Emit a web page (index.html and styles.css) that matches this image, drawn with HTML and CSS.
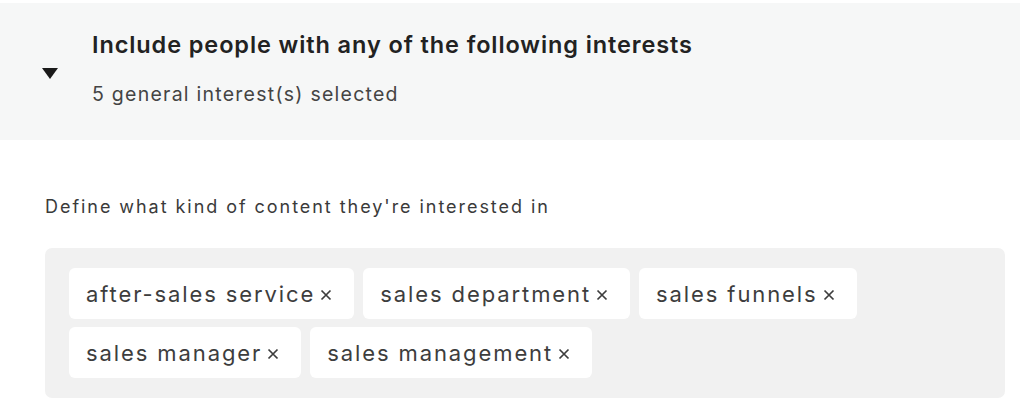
FILE: index.html
```html
<!DOCTYPE html>
<html>
<head>
<meta charset="utf-8">
<link rel="stylesheet" href="styles.css">
</head>
<body>
<div class="page">
  <div class="header">
    <div class="caret"></div>
    <div class="header-text">
      <div class="title">Include people with any of the following interests</div>
      <div class="subtitle">5 general interest(s) selected</div>
    </div>
  </div>
  <div class="content">
    <div class="label">Define what kind of content they're interested in</div>
    <div class="tagbox">
      <span class="tag"><span class="tag-text">after-sales service</span><svg class="x" viewBox="0 0 12 12"><path d="M1.5 1.5 L10.5 10.5 M10.5 1.5 L1.5 10.5"/></svg></span>
      <span class="tag"><span class="tag-text">sales department</span><svg class="x" viewBox="0 0 12 12"><path d="M1.5 1.5 L10.5 10.5 M10.5 1.5 L1.5 10.5"/></svg></span>
      <span class="tag"><span class="tag-text">sales funnels</span><svg class="x" viewBox="0 0 12 12"><path d="M1.5 1.5 L10.5 10.5 M10.5 1.5 L1.5 10.5"/></svg></span>
      <span class="tag"><span class="tag-text">sales manager</span><svg class="x" viewBox="0 0 12 12"><path d="M1.5 1.5 L10.5 10.5 M10.5 1.5 L1.5 10.5"/></svg></span>
      <span class="tag"><span class="tag-text">sales management</span><svg class="x" viewBox="0 0 12 12"><path d="M1.5 1.5 L10.5 10.5 M10.5 1.5 L1.5 10.5"/></svg></span>
    </div>
  </div>
</div>
</body>
</html>
```
FILE: styles.css
```css
html, body {
  margin: 0;
  padding: 0;
  background: #ffffff;
}
body {
  font-family: Inter, "Noto Sans", sans-serif;
  color: #2b2b2b;
}
.page {
  width: 1020px;
  height: 402px;
  overflow: hidden;
  padding-top: 3px;
  box-sizing: border-box;
}
.header {
  height: 137px;
  background: #f6f7f7;
  display: flex;
  align-items: center;
  box-sizing: border-box;
  padding-left: 42px;
}
.caret {
  width: 0;
  height: 0;
  border-left: 8.5px solid transparent;
  border-right: 8.5px solid transparent;
  border-top: 11px solid #1a1a1a;
  margin-top: 4px;
  margin-right: 34px;
}
.header-text {
  display: flex;
  flex-direction: column;
  gap: 22px;
  margin-top: -4px;
}
.title {
  font-size: 23.5px;
  font-weight: 600;
  color: #222222;
  line-height: 28px;
  letter-spacing: 0.9px;
  margin-top: -2px;
}
.subtitle {
  font-size: 19.5px;
  color: #444444;
  line-height: 26px;
  letter-spacing: 1.25px;
}
.content {
  padding: 56px 15px 0 45px;
}
.label {
  font-size: 18px;
  color: #3a3a3a;
  line-height: 22px;
  letter-spacing: 1.95px;
}
.tagbox {
  margin-top: 30px;
  background: #f1f1f1;
  border-radius: 7px;
  padding: 20px 24px 20px 24px;
  display: flex;
  flex-wrap: wrap;
  gap: 8px 9px;
}
.tag {
  background: #ffffff;
  border-radius: 6px;
  height: 51px;
  display: inline-flex;
  align-items: center;
  padding: 0 22px 0 17px;
  font-size: 22px;
  color: #3d3d3d;
  box-sizing: border-box;
}
.tag-text {
  letter-spacing: 1.9px;
}
.x {
  width: 12px;
  height: 12px;
  margin-left: 5px;
  margin-top: 3px;
  stroke: #3d3d3d;
  stroke-width: 1.7;
  fill: none;
}
```
